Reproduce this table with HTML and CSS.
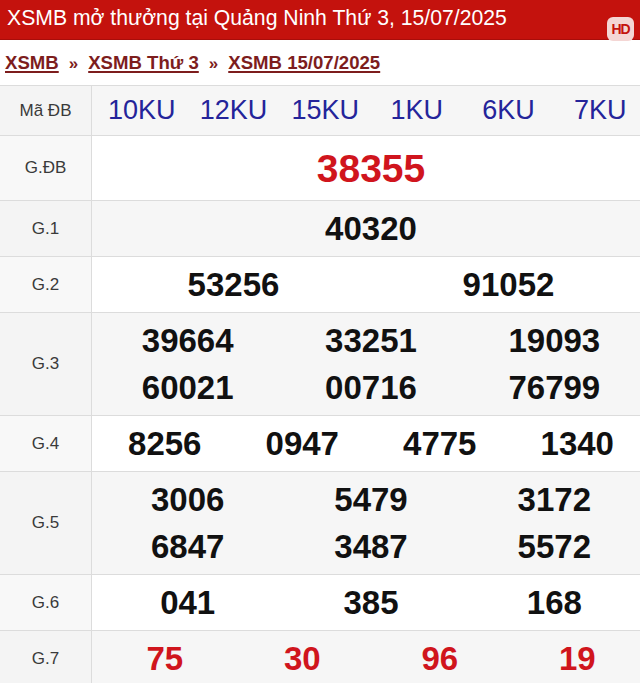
FILE: index.html
```html
<!DOCTYPE html>
<html lang="vi">
<head>
<meta charset="utf-8">
<title>XSMB 15/07/2025</title>
<link rel="stylesheet" href="styles.css">
</head>
<body>
<header class="topbar">
  <h1 class="title">XSMB mở thưởng tại Quảng Ninh Thứ 3, 15/07/2025</h1>
  <span class="hd">HD</span>
</header>
<nav class="crumbs">
  <a href="#">XSMB</a><span class="sep">»</span><a href="#">XSMB Thứ 3</a><span class="sep">»</span><a href="#">XSMB 15/07/2025</a>
</nav>
<div class="results">
  <div class="row alt codes-row">
    <div class="label">Mã ĐB</div>
    <div class="vals c6 codes"><span>10KU</span><span>12KU</span><span>15KU</span><span>1KU</span><span>6KU</span><span>7KU</span></div>
  </div>
  <div class="row special">
    <div class="label">G.ĐB</div>
    <div class="vals c1 red big"><span>38355</span></div>
  </div>
  <div class="row alt">
    <div class="label">G.1</div>
    <div class="vals c1"><span>40320</span></div>
  </div>
  <div class="row">
    <div class="label">G.2</div>
    <div class="vals c2"><span>53256</span><span>91052</span></div>
  </div>
  <div class="row alt">
    <div class="label">G.3</div>
    <div class="vals c3"><span>39664</span><span>33251</span><span>19093</span><span>60021</span><span>00716</span><span>76799</span></div>
  </div>
  <div class="row">
    <div class="label">G.4</div>
    <div class="vals c4"><span>8256</span><span>0947</span><span>4775</span><span>1340</span></div>
  </div>
  <div class="row alt">
    <div class="label">G.5</div>
    <div class="vals c3"><span>3006</span><span>5479</span><span>3172</span><span>6847</span><span>3487</span><span>5572</span></div>
  </div>
  <div class="row">
    <div class="label">G.6</div>
    <div class="vals c3"><span>041</span><span>385</span><span>168</span></div>
  </div>
  <div class="row alt">
    <div class="label">G.7</div>
    <div class="vals c4 red"><span>75</span><span>30</span><span>96</span><span>19</span></div>
  </div>
</div>
</body>
</html>
```
FILE: styles.css
```css
html, body {
  margin: 0;
  padding: 0;
  overflow: hidden;
  background: #fff;
}
body {
  font-family: "Liberation Sans", Arial, sans-serif;
  width: 640px;
  height: 683px;
}
.topbar {
  position: relative;
  height: 40px;
  background: #c4120d;
  border-bottom: 1px solid #a80d0a;
  box-sizing: border-box;
}
.title {
  margin: 0;
  padding-left: 7px;
  font-size: 21.2px;
  font-weight: normal;
  line-height: 35px;
  color: #fff;
  white-space: nowrap;
}
.hd {
  position: absolute;
  right: 6px;
  top: 17px;
  width: 27px;
  height: 24px;
  border-radius: 6px;
  background: #f4d6d4;
  color: #c4120d;
  font-weight: bold;
  font-size: 14px;
  line-height: 24px;
  text-align: center;
  letter-spacing: -1px;
}
.crumbs {
  height: 45px;
  line-height: 45px;
  padding-left: 5px;
  font-size: 18.6px;
  font-weight: bold;
  color: #7d1d1d;
  white-space: nowrap;
}
.crumbs a {
  color: #7d1d1d;
  text-decoration: underline;
  text-decoration-thickness: 1.5px;
  text-underline-offset: 2px;
}
.sep {
  margin: 0 10px;
  font-size: 17px;
}
.results {
  width: 650px;
  border-top: 1px solid #dcdcdc;
}
.row {
  display: grid;
  grid-template-columns: 92px 1fr;
  border-bottom: 1px solid #dcdcdc;
  background: #fff;
  min-height: 55px;
}
.row.alt {
  background: #f6f6f6;
}
.row.special {
  min-height: 64px;
}
.row.codes-row {
  min-height: 49px;
}
.label {
  border-right: 1px solid #dcdcdc;
  display: flex;
  align-items: center;
  justify-content: center;
  font-size: 17px;
  color: #3a3a3a;
  background: #f8f8f8;
}
.row.alt .label {
  background: #f4f4f4;
}
.vals {
  display: grid;
  align-content: center;
  justify-items: center;
  align-items: center;
  padding: 4px 4px;
  font-size: 33px;
  font-weight: bold;
  color: #111;
  grid-auto-rows: 47px;
}
.vals span {
  line-height: 47px;
}
.c1 { grid-template-columns: 1fr; }
.c2 { grid-template-columns: repeat(2, 1fr); }
.c3 { grid-template-columns: repeat(3, 1fr); }
.c4 { grid-template-columns: repeat(4, 1fr); }
.c6 { grid-template-columns: repeat(6, 1fr); }
.codes {
  font-size: 27px;
  font-weight: normal;
  color: #24249a;
  padding: 0 4px;
}
.red {
  color: #d0151d;
}
.big {
  font-size: 39px;
}
```
